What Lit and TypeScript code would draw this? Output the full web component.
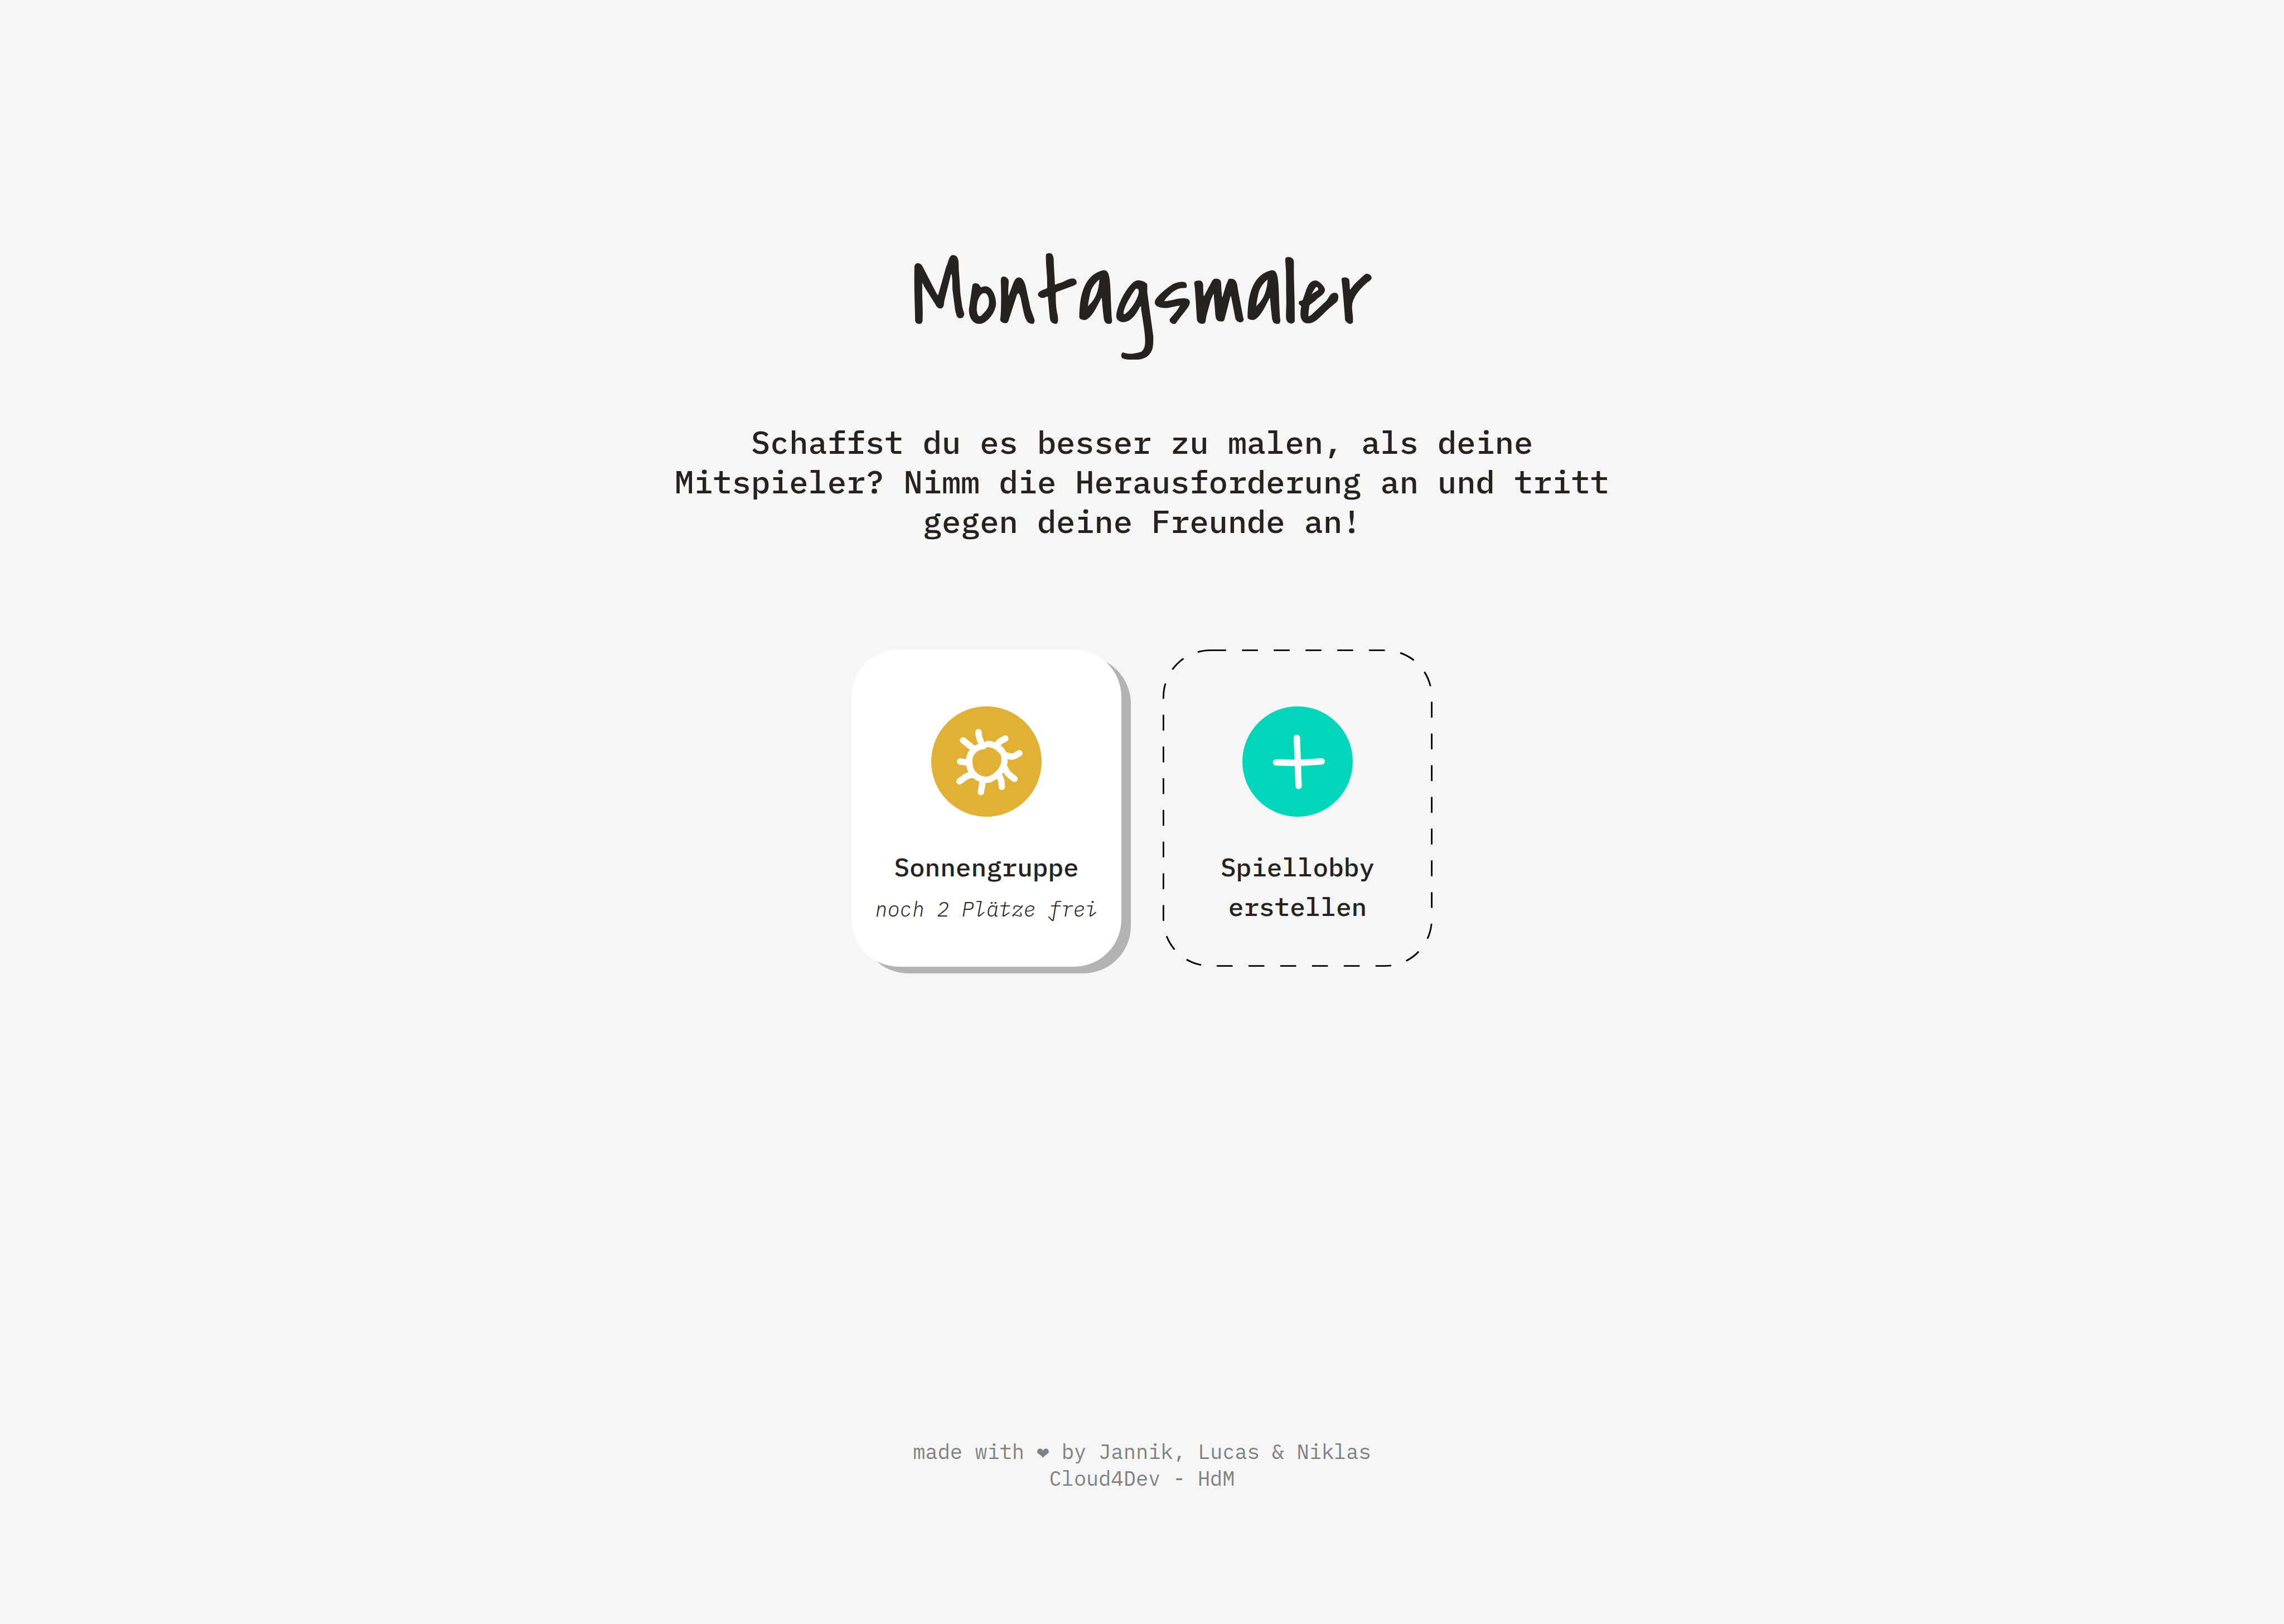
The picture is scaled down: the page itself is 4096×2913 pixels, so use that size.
import { LitElement, html, css, svg } from "lit";
import { customElement } from "lit/decorators.js";

const sunIcon = svg`
  <svg class="icon" viewBox="66 49 624 624" aria-hidden="true">
    <circle cx="378" cy="361" r="312" fill="#e1b136" />
    <g fill="none" stroke="#fff" stroke-width="36" stroke-linecap="round" stroke-linejoin="round">
      <path d="M384 262C414 261 450 280 469 307C481 325 482 350 478 374C468 413 435 445 398 461C370 469 338 460 314 440C288 418 279 385 281 352C283 310 315 277 362 273" />
      <path d="M333 195C333 225 340 232 352 262" />
      <path d="M246 241L300 285" />
      <path d="M229 361L270 366" />
      <path d="M226 473C252 455 262 440 300 436" />
      <path d="M347 534L358 466" />
      <path d="M465 504C464 470 460 462 452 443" />
      <path d="M537 459C505 432 500 435 480 394" />
      <path d="M564 314C530 336 530 337 484 326" />
      <path d="M485 231C455 246 455 245 437 268" />
    </g>
  </svg>
`;

const plusIcon = svg`
  <svg class="icon" viewBox="60 49 624 624" aria-hidden="true">
    <circle cx="372" cy="361" r="312" fill="#01d6bb" />
    <g fill="none" stroke="#fff" stroke-width="36" stroke-linecap="round" stroke-linejoin="round">
      <path d="M368 227L378 499" />
      <path d="M250 366L375 369L508 360" />
    </g>
  </svg>
`;

@customElement("app-root")
export class AppRoot extends LitElement {
  static styles = css`
    :host {
      display: block;
      background: #f6f6f6;
      color: #24231f;
      font-family: "IBM Plex Mono", "Liberation Mono", monospace;
    }

    .page {
      box-sizing: border-box;
      min-height: 100vh;
      display: flex;
      flex-direction: column;
      align-items: center;
      padding: 430px 48px 238px;
      text-align: center;
    }

    .title {
      margin: 0 0 128px;
      font-family: "Covered By Your Grace", "Liberation Sans Narrow", "Liberation Sans", sans-serif;
      font-size: 171px;
      line-height: 200px;
      font-weight: 400;
    }

    .intro {
      margin: 0 0 194px;
      max-width: 1706px;
      font-size: 57px;
      line-height: 71px;
      font-weight: 500;
    }

    .lobbies {
      display: flex;
      flex-wrap: wrap;
      justify-content: center;
      gap: 74px;
      margin: 0 0 96px;
      padding: 0;
      list-style: none;
    }

    .card {
      position: relative;
      box-sizing: border-box;
      display: flex;
      flex-direction: column;
      align-items: center;
      width: 484px;
      min-height: 569px;
      padding: 102px 24px 60px;
      border: 0;
      border-radius: 85px;
      background: none;
      color: inherit;
      font: inherit;
      cursor: pointer;
    }

    .filled {
      background: #fff;
      box-shadow: 17px 12px 0 #b3b3b3;
    }

    .outline {
      position: absolute;
      inset: 0;
      width: 100%;
      height: 100%;
      overflow: hidden;
      border-radius: 85px;
    }

    .icon {
      display: block;
      width: 198px;
      height: 198px;
      margin-bottom: 55px;
    }

    .name {
      max-width: 340px;
      font-size: 46px;
      line-height: 71px;
      font-weight: 500;
    }

    .seats {
      font-size: 37px;
      line-height: 78px;
      font-style: italic;
      font-weight: 300;
      white-space: nowrap;
    }

    .footer {
      margin-top: auto;
      color: #7d8182;
      font-size: 37px;
      line-height: 48px;
    }

    .line {
      margin: 0;
    }
  `;

  render() {
    return html`
      <main class="page">
        <h1 class="title">Montagsmaler</h1>
        <p class="intro">
          Schaffst du es besser zu malen, als deine Mitspieler? Nimm die
          Herausforderung an und tritt gegen deine Freunde an!
        </p>
        <ul class="lobbies">
          <li>
            <button class="card filled" type="button">
              ${sunIcon}
              <span class="name">Sonnengruppe</span>
              <span class="seats">noch 2 Plätze frei</span>
            </button>
          </li>
          <li>
            <button class="card" type="button">
              <svg class="outline" viewBox="0 0 170 200" preserveAspectRatio="none" aria-hidden="true">
                <rect width="170" height="200" rx="30" fill="none" stroke="#000" stroke-width="2" stroke-dasharray="10 10" />
              </svg>
              ${plusIcon}
              <span class="name">Spiellobby erstellen</span>
            </button>
          </li>
        </ul>
        <footer class="footer">
          <p class="line">made with ❤︎ by Jannik, Lucas &amp; Niklas</p>
          <p class="line">Cloud4Dev - HdM</p>
        </footer>
      </main>
    `;
  }
}
